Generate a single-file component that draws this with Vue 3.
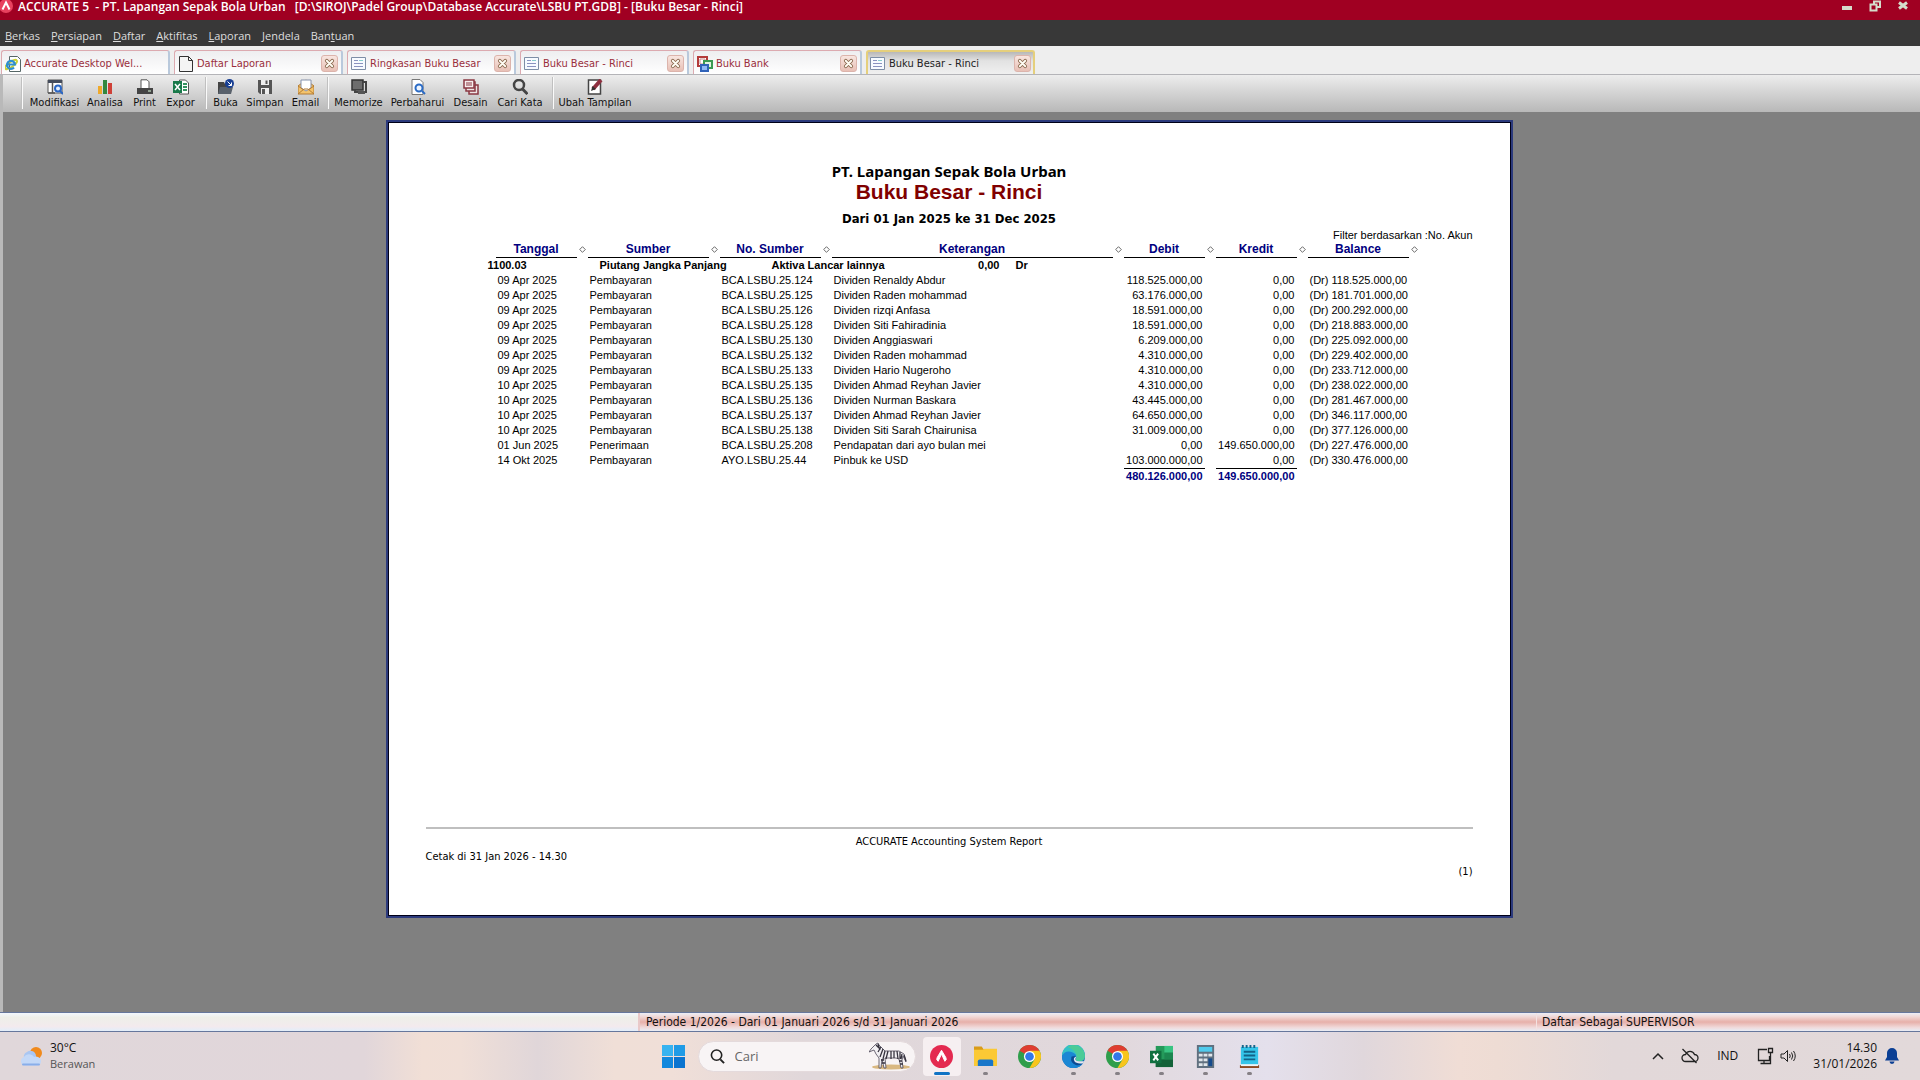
<script setup>
const menus = [
  ['', 'B', 'erkas'],
  ['', 'P', 'ersiapan'],
  ['', 'D', 'aftar'],
  ['', 'A', 'ktifitas'],
  ['', 'L', 'aporan'],
  ['', 'J', 'endela'],
  ['Ban', 't', 'uan'],
]

const tabs = [
  { label: 'Accurate Desktop Wel...', icon: 'web', closable: false },
  { label: 'Daftar Laporan', icon: 'page', closable: true },
  { label: 'Ringkasan Buku Besar', icon: 'report', closable: true },
  { label: 'Buku Besar - Rinci', icon: 'report', closable: true },
  { label: 'Buku Bank', icon: 'bank', closable: true },
  { label: 'Buku Besar - Rinci', icon: 'report', closable: true, active: true },
]

const toolGroups = [
  [
    { label: 'Modifikasi', icon: 'modify', width: 57 },
    { label: 'Analisa', icon: 'chart', width: 44 },
    { label: 'Print', icon: 'print', width: 35 },
    { label: 'Expor', icon: 'excel', width: 37 },
  ],
  [
    { label: 'Buka', icon: 'open', width: 33 },
    { label: 'Simpan', icon: 'save', width: 46 },
    { label: 'Email', icon: 'mail', width: 35 },
  ],
  [
    { label: 'Memorize', icon: 'memory', width: 55 },
    { label: 'Perbaharui', icon: 'refresh', width: 63 },
    { label: 'Desain', icon: 'design', width: 43 },
    { label: 'Cari Kata', icon: 'find', width: 56 },
  ],
  [{ label: 'Ubah Tampilan', icon: 'edit', width: 78 }],
]

const columns = ['Tanggal', 'Sumber', 'No. Sumber', 'Keterangan', 'Debit', 'Kredit', 'Balance']
const widths = [81, 121, 101, 281, 81, 81, 101]

const rows = [
  ['09 Apr 2025', 'Pembayaran', 'BCA.LSBU.25.124', 'Dividen Renaldy Abdur', '118.525.000,00', '0,00', '(Dr) 118.525.000,00'],
  ['09 Apr 2025', 'Pembayaran', 'BCA.LSBU.25.125', 'Dividen Raden mohammad', '63.176.000,00', '0,00', '(Dr) 181.701.000,00'],
  ['09 Apr 2025', 'Pembayaran', 'BCA.LSBU.25.126', 'Dividen rizqi Anfasa', '18.591.000,00', '0,00', '(Dr) 200.292.000,00'],
  ['09 Apr 2025', 'Pembayaran', 'BCA.LSBU.25.128', 'Dividen Siti Fahiradinia', '18.591.000,00', '0,00', '(Dr) 218.883.000,00'],
  ['09 Apr 2025', 'Pembayaran', 'BCA.LSBU.25.130', 'Dividen Anggiaswari', '6.209.000,00', '0,00', '(Dr) 225.092.000,00'],
  ['09 Apr 2025', 'Pembayaran', 'BCA.LSBU.25.132', 'Dividen Raden mohammad', '4.310.000,00', '0,00', '(Dr) 229.402.000,00'],
  ['09 Apr 2025', 'Pembayaran', 'BCA.LSBU.25.133', 'Dividen Hario Nugeroho', '4.310.000,00', '0,00', '(Dr) 233.712.000,00'],
  ['10 Apr 2025', 'Pembayaran', 'BCA.LSBU.25.135', 'Dividen Ahmad Reyhan Javier', '4.310.000,00', '0,00', '(Dr) 238.022.000,00'],
  ['10 Apr 2025', 'Pembayaran', 'BCA.LSBU.25.136', 'Dividen Nurman Baskara', '43.445.000,00', '0,00', '(Dr) 281.467.000,00'],
  ['10 Apr 2025', 'Pembayaran', 'BCA.LSBU.25.137', 'Dividen Ahmad Reyhan Javier', '64.650.000,00', '0,00', '(Dr) 346.117.000,00'],
  ['10 Apr 2025', 'Pembayaran', 'BCA.LSBU.25.138', 'Dividen Siti Sarah Chairunisa', '31.009.000,00', '0,00', '(Dr) 377.126.000,00'],
  ['01 Jun 2025', 'Penerimaan', 'BCA.LSBU.25.208', 'Pendapatan dari ayo bulan mei', '0,00', '149.650.000,00', '(Dr) 227.476.000,00'],
  ['14 Okt 2025', 'Pembayaran', 'AYO.LSBU.25.44', 'Pinbuk ke USD', '103.000.000,00', '0,00', '(Dr) 330.476.000,00'],
]

const apps = ['accurate', 'explorer', 'chrome', 'edge', 'chrome', 'excel', 'calc', 'notepad']
</script>

<template>
  <div class="desktop">
    <header class="titlebar">
      <svg class="app-mark" viewBox="0 0 14 14" aria-hidden="true">
        <circle cx="6" cy="6" r="7" fill="#e8415f" />
        <path d="M2.500 9.500 6 2.500 9.500 9.500" fill="none" stroke="#fff" stroke-width="2" />
      </svg>
      <h1>ACCURATE 5&nbsp; - PT. Lapangan Sepak Bola Urban&nbsp;&nbsp; [D:\SIROJ\Padel Group\Database Accurate\LSBU PT.GDB] - [Buku Besar - Rinci]</h1>
      <div class="window-buttons">
        <button aria-label="Minimize"><svg viewBox="0 0 12 12"><path d="M1 6h10v4H1z" fill="#d5dccb" /></svg></button>
        <button aria-label="Restore"><svg viewBox="0 0 12 12"><path d="M5 4V1.500h6V7H8M1.500 4.500h6v6h-6z" fill="none" stroke="#d5dccb" stroke-width="2" /></svg></button>
        <button aria-label="Close"><svg viewBox="0 0 12 12"><path d="M2 2.500 10 8.500M10 2.500 2 8.500" stroke="#d5dccb" stroke-width="3" /></svg></button>
      </div>
    </header>

    <nav class="menubar">
      <a v-for="m in menus" :key="m[2]" href="#">{{ m[0] }}<u>{{ m[1] }}</u>{{ m[2] }}</a>
    </nav>

    <div class="tabs">
      <div v-for="(t, i) in tabs" :key="i" class="tab" :class="{ active: t.active }">
        <svg class="tab-icon" viewBox="0 0 16 16" aria-hidden="true">
          <template v-if="t.icon === 'web'">
            <path d="M4.500.5h8l3 3v12h-11z" fill="#fff" stroke="#566" />
            <ellipse cx="6" cy="8.500" rx="7" ry="2.500" fill="none" stroke="#c9d23a" stroke-width="2" transform="rotate(-35 6 8.500)" />
            <path d="M2 8.500h8a4 4 0 1 0-1 3" fill="none" stroke="#2f8fd0" stroke-width="2.200" />
          </template>
          <path v-else-if="t.icon === 'page'" d="M1.500.5h9l4 4v11h-13zM10.500.5v4h4" fill="#f4f4f4" stroke="#333" />
          <template v-else-if="t.icon === 'report'">
            <path d="M.5 1.500h14v12H.5z" fill="#f7fbff" stroke="#7d8ea6" />
            <path d="M3 4.500h4M3 7.500h9M3 10.500h9" stroke="#8a93c0" />
            <path d="M8 4.500h4" stroke="#8cc" />
          </template>
          <template v-else>
            <path d="M1 1h9v9H1z" fill="#fff" stroke="#b33a3a" stroke-width="2" />
            <path d="M3 3h5v5H3z" fill="#fff" stroke="#c98a8a" />
            <path d="M7 5h8v7H7z" fill="#dff3df" stroke="#3a9a52" stroke-width="2" />
            <path d="M4 9h7v6H4z" fill="#8db8f5" stroke="#2f62b8" stroke-width="2" />
          </template>
        </svg>
        <a href="#">{{ t.label }}</a>
        <button v-if="t.closable" class="tab-close" aria-label="Tutup tab">
          <svg viewBox="0 0 12 12"><path d="M3 3 9 9M9 3 3 9" stroke="#8a6a50" stroke-width="4" stroke-linecap="round" /><path d="M3 3 9 9M9 3 3 9" stroke="#fffdf4" stroke-width="2" stroke-linecap="round" /></svg>
        </button>
      </div>
    </div>

    <div class="client">
      <div class="toolbar">
        <div v-for="(g, gi) in toolGroups" :key="gi" class="tool-group">
          <button v-for="b in g" :key="b.label" class="tool" :style="{ width: b.width + 'px' }">
            <svg viewBox="0 0 16 16" aria-hidden="true">
              <template v-if="b.icon === 'modify'">
                <path d="M1 1h14v13H1z" fill="#fff" stroke="#555" /><path d="M1 1h14v3H1z" fill="#444c5c" /><path d="M5.500 4v10M1 14h7" stroke="#555" stroke-width="1.500" />
                <circle cx="11" cy="9.500" r="3" fill="#e5f0ff" stroke="#2a66c4" stroke-width="2" /><path d="m13 12 3 3" stroke="#2a66c4" stroke-width="2" />
              </template>
              <template v-else-if="b.icon === 'chart'">
                <path d="M1 7h4v8H1z" fill="#efa92b" /><path d="M6 1h4v14H6z" fill="#33873f" /><path d="M11 4h4v11h-4z" fill="#cf4037" />
              </template>
              <template v-else-if="b.icon === 'print'">
                <path d="M4 9V.8h6l2 2V9" fill="#fff" stroke="#555" /><path d="M0 9h16v6H0z" fill="#444" /><path d="M11 12h3" stroke="#dfd" />
              </template>
              <template v-else-if="b.icon === 'excel'">
                <path d="M6.500 1h6l3 3v11h-9z" fill="#fff" stroke="#555" /><path d="M10 5h4M10 8h4M10 11h4" stroke="#349260" stroke-width="2" /><path d="M0 2h9v12H0z" fill="#18794a" /><path d="m2 5 5 6M7 5l-5 6" stroke="#fff" stroke-width="1.500" />
              </template>
              <template v-else-if="b.icon === 'open'">
                <path d="M0 3h6l1 2h6v10H0z" fill="#444" /><path d="M2 8h13l-2 7H0z" fill="#59616b" /><circle cx="11.500" cy="4.500" r="4.500" fill="#183f93" /><path d="m9.500 2.500 4 4M13.500 3.500v3h-3" fill="none" stroke="#fff" />
              </template>
              <template v-else-if="b.icon === 'save'">
                <path d="M1 1h14v14H3l-2-2z" fill="#555" /><path d="M4 1h8v5H4zM4 9h8v6H4z" fill="#eee" /><path d="M8.500 1.500h2V5h-2zM5 10h3v5H5z" fill="#555" />
              </template>
              <template v-else-if="b.icon === 'mail'">
                <path d="M0 7 8 1l8 6v8H0z" fill="#f3c36c" stroke="#b27b35" /><path d="M3 1h10v8l-5 3-5-3z" fill="#fff" stroke="#8693ad" /><path d="m0 15 6-5h4l6 5M0 7l6 4M16 7l-6 4" fill="none" stroke="#b27b35" />
              </template>
              <template v-else-if="b.icon === 'memory'">
                <path d="M1 1h11v10H1z" fill="#6d6d6d" stroke="#333" stroke-width="1.500" /><path d="M12 3h3v10H4v-2" fill="none" stroke="#444" stroke-width="2" /><path d="M7 12h7v3H7z" fill="#555" />
              </template>
              <template v-else-if="b.icon === 'refresh'">
                <path d="M2 .5h8l3 3v12H2z" fill="#fff" stroke="#777" /><circle cx="9" cy="9" r="3.500" fill="#edf5ff" stroke="#2b6bc5" stroke-width="2" /><path d="m12 12 3 3" stroke="#2b6bc5" stroke-width="2" />
              </template>
              <template v-else-if="b.icon === 'design'">
                <path d="M6 6h9v9H6z" fill="#efe5e5" stroke="#8a3943" stroke-width="1.500" /><path d="M3 3h9v9H3z" fill="#efe5e5" stroke="#8a3943" stroke-width="1.500" /><path d="M1 1h10v8H1z" fill="#f7eeee" stroke="#8a3943" stroke-width="1.500" /><path d="M3 4h6M3 6h6" stroke="#8a3943" />
              </template>
              <template v-else-if="b.icon === 'find'">
                <circle cx="7" cy="6" r="5" fill="none" stroke="#444" stroke-width="2.500" /><path d="m10.500 10 5 5" stroke="#444" stroke-width="3" />
              </template>
              <template v-else>
                <path d="M1.500 1h12v14h-12z" fill="#fff" stroke="#444" stroke-width="1.500" /><path d="M6 10 14 1" stroke="#8f3040" stroke-width="4" /><path d="m4 12 1.500-5 3.500 3z" fill="#333" />
              </template>
            </svg>
            <span>{{ b.label }}</span>
          </button>
        </div>
      </div>

      <main class="workspace">
        <article class="sheet">
          <h2 class="company">PT. Lapangan Sepak Bola Urban</h2>
          <h2 class="report-title">Buku Besar - Rinci</h2>
          <h3 class="period">Dari 01 Jan 2025 ke 31 Dec 2025</h3>
          <p class="filter">Filter berdasarkan :No. Akun</p>

          <table class="ledger">
            <colgroup>
              <template v-for="(w, i) in widths" :key="i">
                <col :style="{ width: w + 'px' }" />
                <col class="gutter" />
              </template>
            </colgroup>
            <thead>
              <tr>
                <template v-for="c in columns" :key="c">
                  <th class="head" scope="col">{{ c }}</th>
                  <td class="grip"><svg viewBox="0 0 8 8" aria-hidden="true"><path d="M4 .8 7.200 4 4 7.200.8 4z" fill="#fff" stroke="#444" stroke-width=".9" /></svg></td>
                </template>
              </tr>
            </thead>
            <tbody>
              <tr>
                <td colspan="14">
                  <div class="account">
                    <span>1100.03</span><span>Piutang Jangka Panjang</span><span>Aktiva Lancar lainnya</span><span class="opening">0,00</span><span>Dr</span>
                  </div>
                </td>
              </tr>
              <tr v-for="(r, ri) in rows" :key="ri">
                <template v-for="(c, ci) in r" :key="ci">
                  <td :class="{ num: ci > 3 }">{{ c }}</td>
                  <td></td>
                </template>
              </tr>
            </tbody>
            <tfoot>
              <tr>
                <td colspan="8"></td>
                <td class="total">480.126.000,00</td>
                <td></td>
                <td class="total">149.650.000,00</td>
                <td colspan="3"></td>
              </tr>
            </tfoot>
          </table>

          <footer class="sheet-footer">
            <p class="center">ACCURATE Accounting System Report</p>
            <p>Cetak di 31 Jan 2026 - 14.30</p>
            <p class="right">(1)</p>
          </footer>
        </article>
      </main>
    </div>

    <div class="statusbar">
      <div class="cell blank"></div>
      <div class="cell period-cell">Periode 1/2026 - Dari 01 Januari 2026 s/d 31 Januari 2026</div>
      <div class="cell user-cell">Daftar Sebagai SUPERVISOR</div>
    </div>

    <footer class="taskbar">
      <div class="weather">
        <svg viewBox="0 0 24 20" aria-hidden="true">
          <circle cx="17" cy="7" r="6" fill="#f08a1c" />
          <path d="M6 14a5 5 0 0 1 2-8 5.500 5.500 0 0 1 9 4v4z" fill="#a9c6f2" />
          <path d="M5 19.500a4.500 4.500 0 0 1 0-8.500 6 6 0 0 1 10 0 5 5 0 0 1 4 0 4.500 4.500 0 0 1 0 8.500z" fill="#c3d8f7" />
          <path d="M4 18.500h16" stroke="#89aee9" stroke-width="2" stroke-linecap="round" />
        </svg>
        <div><div>30°C</div><div class="sky">Berawan</div></div>
      </div>

      <div class="dock">
        <button class="start" aria-label="Start">
          <svg viewBox="0 0 24 24"><path d="M0 0h11.500v11.500H0z" fill="#37b3f0" /><path d="M12.500 0H24v11.500H12.500z" fill="#1f9be6" /><path d="M0 12.500h11.500V24H0z" fill="#1288dd" /><path d="M12.500 12.500H24V24H12.500z" fill="#0a74d0" /></svg>
        </button>
        <label class="search">
          <svg class="lens" viewBox="0 0 16 16" aria-hidden="true"><circle cx="7" cy="6.500" r="5.500" fill="none" stroke="#222" stroke-width="1.700" /><path d="m11 11 4 4" stroke="#222" stroke-width="2" /></svg>
          <input type="text" placeholder="Cari" aria-label="Cari" />
          <svg class="zebra" viewBox="0 0 42 28" aria-hidden="true">
            <ellipse cx="22" cy="25" rx="19" ry="2.500" fill="#d9b881" />
            <path d="M2 7 7 2l2-1 1 2 6 6 14 0 5 3 2 8-3-6-1 4 1 8h-2l-2-9-3-1-11 0 1 10h-2l-2-9-1 9h-2l0-10-3-4-2-4-5 2z" fill="#f2f0f3" stroke="#4b4657" stroke-width=".8" />
            <path d="m7 3 3 3M9 2l2 6M12 5l-3 5M14 7l-3 8M16 9l-2 8M19 9l-2 8M22 9v8M25 9v7M28 9l1 8M31 10l0 7M33 12l-1 5M12 18h3M13 21h3M30 19h3M31 22h3M35 13l2 6" fill="none" stroke="#37333f" stroke-width="1.300" />
          </svg>
        </label>
        <button v-for="(a, i) in apps" :key="i" class="app" :class="{ current: a === 'accurate' }" :aria-label="a">
          <svg viewBox="0 0 24 24">
            <template v-if="a === 'accurate'">
              <circle cx="12" cy="12" r="12" fill="#e42a50" /><path d="M12 5.500 7.500 13a3 3 0 0 0 1 4L12 9.500l3.500 7.500a3 3 0 0 0 1-4z" fill="#fff" stroke="#fff" stroke-width="1" />
            </template>
            <template v-else-if="a === 'explorer'">
              <path d="M0 1.500h8l2 3h14v6H0z" fill="#d99b18" /><path d="M0 5h9l2-1h13v18H0z" fill="#fbc935" /><path d="M4 22v-5q0-2 2-2h12q2 0 2 2v5z" fill="#1876c9" />
            </template>
            <template v-else-if="a === 'chrome'">
              <circle cx="12" cy="12" r="12" fill="#2f9e4b" /><path d="M12 12 1.600 6A12 12 0 0 1 22.400 6z" fill="#df3d31" /><path d="M12 6h10.400A12 12 0 0 1 12 24l5.200-9z" fill="#f8c51d" /><circle cx="12" cy="12" r="5.800" fill="#fff" /><circle cx="12" cy="12" r="4.500" fill="#3278e8" />
            </template>
            <template v-else-if="a === 'edge'">
              <circle cx="12" cy="12" r="12" fill="#1267b4" /><path d="M0 11A12 12 0 0 1 24 11q0 6-6 6-5 0-3-4 0-4-5-4-6 0-10 2z" fill="#35c1c6" /><path d="M12 0a12 12 0 0 1 12 11q0 6-6 6-5 0-3-4 1-7-9-11 3-2 6-2z" fill="#55cf83" opacity=".7" /><path d="M0 12Q2 6 9 7q5 1 6 5-3-2-5 1-1 6 6 8 3 0 6-2-3 5-10 5A12 12 0 0 1 0 12z" fill="#1b87d4" /><path d="M10 12q-2 7 5 9 4 1 7-2-4 1-8-2-2-2 0-5z" fill="#0d4b93" /><path d="M15 12q-3 5 3 5h5l-1 2q-7 1-9-2-2-4 2-5z" fill="#e6e6ee" />
            </template>
            <template v-else-if="a === 'excel'">
              <path d="M6 1h18v22H6z" fill="#249a5a" /><path d="M15 1h9v7h-9z" fill="#38c481" /><path d="M6 15h18v8H6z" fill="#136238" /><path d="M15 8h9v7h-9z" fill="#1c8750" /><path d="M0 6h12v13H0z" fill="#107040" /><path d="m3.500 9 5 7M8.500 9l-5 7" stroke="#fff" stroke-width="2" />
            </template>
            <template v-else-if="a === 'calc'">
              <path d="M3 0h18v24H3z" fill="#60707f" /><path d="M5 2h14v5H5z" fill="#50cbed" /><path d="M5 9h4v3H5zM10 9h4v3h-4zM15 9h4v3h-4zM5 14h4v3H5zM10 14h4v3h-4zM5 19h4v3H5zM10 19h4v3h-4z" fill="#e0e6eb" /><path d="M15 14h4v8h-4z" fill="#164b8c" />
            </template>
            <template v-else>
              <path d="M3 2h18v19H3z" fill="#35c4e9" /><path d="M2 21h20v3H2z" fill="#8c4a22" /><path d="M3 20h18v2H3z" fill="#edf4f6" /><path d="M6 7h12M6 11h12M6 15h12" stroke="#136388" stroke-width="2" /><path d="M5 0v3M9 0v3M13 0v3M17 0v3" stroke="#17658a" stroke-width="2" />
            </template>
          </svg>
          <i v-if="i !== 2"></i>
        </button>
      </div>

      <div class="tray">
        <svg class="t-chev" viewBox="0 0 12 12" aria-hidden="true"><path d="m1 9 5-5 5 5" fill="none" stroke="#222" stroke-width="1.500" /></svg>
        <svg class="t-cloud" viewBox="0 0 18 16" aria-hidden="true"><path d="M4.500 13.500a3.500 3.500 0 0 1 0-7 4.800 4.800 0 0 1 9 0 3.500 3.500 0 0 1 0 7zM1.500 1l14 14" fill="none" stroke="#222" stroke-width="1.300" /></svg>
        <span class="lang">IND</span>
        <svg class="t-net" viewBox="0 0 18 18" aria-hidden="true"><path d="M11 2.500H2.500v11h11V9M8 13.500v3M4.500 16.500h7M12.500 1.500h4v4h-4zM14.500 5.500v11h-3" fill="none" stroke="#222" stroke-width="1.300" /></svg>
        <svg class="t-vol" viewBox="0 0 16 14" aria-hidden="true"><path d="M1 5h3l3.500-3.500v11L4 9H1zM9.500 5q1.500 2 0 4M11.500 3.500q2.500 3.500 0 7M13.500 2q3.500 5 0 10" fill="none" stroke="#222" /></svg>
        <time class="clock"><span>14.30</span><span>31/01/2026</span></time>
        <svg class="t-bell" viewBox="0 0 14 16" aria-hidden="true"><path d="M7 0a5 5 0 0 1 5 5v4l2 3.500H0L2 9V5a5 5 0 0 1 5-5zM4.500 13.500h5a2.500 2.500 0 0 1-5 0z" fill="#0b3f94" /></svg>
      </div>
    </footer>
  </div>
</template>

<style>
body {
  margin: 0;
}
</style>

<style scoped>
.desktop {
  display: flex;
  flex-direction: column;
  min-height: 100vh;
  font: 11px/14px "DejaVu Sans Condensed", "DejaVu Sans", sans-serif;
  color: #111;
  background: #808080;
}
* {
  box-sizing: border-box;
}
button {
  padding: 0;
  border: 0;
  background: none;
  font: inherit;
  color: inherit;
}
a {
  color: inherit;
  text-decoration: none;
}
svg {
  display: block;
  flex: none;
}
h1, h2, h3, p {
  margin: 0;
}
.titlebar {
  display: flex;
  height: 20px;
  background: #a00022;
  color: #fff;
}
.app-mark {
  width: 14px;
  height: 14px;
}
.titlebar h1 {
  flex: 1;
  padding-left: 4px;
  font: 600 12px/14px "Open Sans", "Noto Sans", sans-serif;
  white-space: nowrap;
}
.window-buttons {
  display: flex;
  gap: 16px;
  padding-right: 11px;
}
.window-buttons svg {
  width: 12px;
  height: 12px;
}
.window-buttons button {
  height: 12px;
}
.menubar {
  display: flex;
  align-items: center;
  gap: 11px;
  height: 26px;
  padding: 6px 5px 0;
  background: #383838;
  font-family: "Open Sans", "Noto Sans", sans-serif;
  color: #dedede;
}
.tabs {
  display: flex;
  gap: 4px;
  height: 29px;
  padding: 4px 0 0 1px;
  background: #eeeeee;
  border-bottom: 1px solid #b4b4b8;
}
.tab {
  display: flex;
  align-items: center;
  gap: 3px;
  width: 169px;
  padding: 2px 3px 0;
  border: 1px solid #dcaab0;
  border-bottom: 0;
  border-right: 2px solid #b9c9dc;
  border-radius: 3px 3px 0 0;
  background: linear-gradient(#eeeef0, #ffffff);
  color: #9a2f3c;
}
.tab.active {
  padding: 1px 2px 0;
  border: 2px solid #e5cf7c;
  border-bottom: 0;
  background: linear-gradient(#b8b8b8, #e2e2e2 40%, #f0f0f0);
  color: #222;
}
.tab-icon {
  width: 16px;
  height: 16px;
}
.tab a {
  flex: 1;
  white-space: nowrap;
}
.tab-close {
  display: flex;
  align-items: center;
  justify-content: center;
  width: 17px;
  height: 17px;
  border: 1px solid #dcb4ac;
  border-radius: 3px;
  background: linear-gradient(#f8e6e0, #e8c0b6);
}
.tab-close svg {
  width: 11px;
  height: 11px;
}
.client {
  flex: 1;
  display: flex;
  flex-direction: column;
  border-left: 3px solid #b9b9b9;
}
.toolbar {
  display: flex;
  height: 37px;
  padding-left: 19px;
  background: linear-gradient(#ededed, #b8b8b8);
}
.tool-group {
  display: flex;
  margin: 2px 0 3px;
  padding: 0 7px 0 3px;
  border-left: 1px solid #fafafa;
  box-shadow: -1px 0 #c0c0c0;
}
.tool-group:nth-child(n + 2) {
  padding: 0 5px 0 2px;
}
.tool {
  display: flex;
  flex-direction: column;
  align-items: center;
  gap: 1px;
  padding-top: 2px;
  white-space: nowrap;
  line-height: 14px;
}
.tool svg {
  width: 16px;
  height: 16px;
}
.workspace {
  flex: 1;
  display: flex;
  justify-content: center;
  align-items: flex-start;
  padding: 8px 25px 32px 0;
}
.sheet {
  display: flex;
  flex-direction: column;
  width: 1127px;
  min-height: 798px;
  padding: 39px 38px 37px;
  border: 2px solid #2c3a7c;
  box-shadow: inset 0 0 0 1px #000018;
  background: #fff;
  font: 11px/15px "Liberation Sans", Arial, sans-serif;
  color: #000;
}
.company,
.report-title,
.period {
  text-align: center;
}
.company {
  font: bold 15px/20px "Noto Sans", sans-serif;
}
.report-title {
  font: bold 21px/22px "Liberation Sans", Arial, sans-serif;
  color: #800000;
}
.period {
  margin-top: 8px;
  font: bold 13px/16px "DejaVu Sans Condensed", "DejaVu Sans", sans-serif;
}
.filter {
  line-height: 15px;
  padding-top: 1px;
  text-align: right;
}
.ledger {
  width: 924px;
  margin-left: 70px;
  table-layout: fixed;
  border-collapse: separate;
  border-spacing: 0;
}
.ledger td,
.ledger th {
  height: 15px;
  padding: 0 2px;
  white-space: nowrap;
}
.ledger .gutter {
  width: 11px;
}
.ledger .head {
  padding-bottom: 2px;
  border-bottom: 1px solid #000;
  font-size: 12px;
  line-height: 12px;
  color: #000080;
}
.ledger .grip {
  padding: 0 2px 2px;
}
.grip svg {
  width: 7px;
  height: 7px;
}
.ledger .num {
  text-align: right;
}
.ledger .total {
  border-top: 1px solid #000;
  text-align: right;
  font-weight: bold;
  line-height: 13px;
  color: #000080;
}
.account {
  display: grid;
  grid-template-columns: 112px 172px 172px 56px 60px;
  margin-left: -10px;
  font-weight: bold;
}
.account .opening {
  text-align: right;
}
.account span:last-child {
  padding-left: 16px;
}
.sheet-footer {
  margin-top: auto;
  padding-top: 5px;
  border-top: 2px solid #bfbfbf;
  font-family: "DejaVu Sans Condensed", "DejaVu Sans", sans-serif;
}
.center {
  text-align: center;
}
.right {
  text-align: right;
}
.statusbar {
  display: flex;
  height: 20px;
  border: solid #66779c;
  border-width: 1px 0;
}
.cell {
  padding: 0 6px;
  font-size: 12px;
  line-height: 18px;
  background: linear-gradient(#eceef6, #f0d9d8 20%, #e7b0aa 50%, #f0d9da 80%, #e8edf6);
}
.blank {
  flex: 0 0 640px;
  border-right: 2px solid #e9c9c9;
  background: linear-gradient(#f2f7fd, #eeefe9 25%, #f3eaee 75%, #e2eefa);
}
.period-cell {
  flex: 1;
}
.user-cell {
  flex: 0 0 384px;
  padding-left: 5px;
  border-left: 1px solid #f3e2e2;
}
.taskbar {
  display: grid;
  grid-template-columns: 1fr auto 1fr;
  height: 48px;
  background: linear-gradient(90deg, #e0d7da 0, #e1d6da 19%, #f1dfd6 22%, #f0dfd7 24%, #e0d6d9 28%, #f0dfd7 32%, #f0dfd8 35%, #e0d7da 42%, #e1d8dc 58%, #e4e0ec 66%, #e0d7dc 71%, #f0ddd5 76%, #eedcd4 78%, #e2d8d9 84%, #e2d9da 100%);
  font: 12px/16px "Open Sans", "Noto Sans", sans-serif;
}
.weather {
  display: flex;
  align-items: center;
  gap: 7px;
  padding-left: 19px;
}
.weather svg {
  width: 24px;
  height: 20px;
}
.sky {
  font-size: 11px;
  color: #555;
}
.dock {
  display: flex;
  align-items: center;
  padding-left: 16px;
}
.start {
  margin-right: 13px;
}
.start svg,
.app svg {
  width: 23px;
  height: 23px;
}
.search {
  display: flex;
  align-items: center;
  width: 218px;
  height: 31px;
  margin-right: 7px;
  padding: 0 4px 0 11px;
  border: 1px solid #e4dadc;
  border-radius: 16px;
  background: #f8f4f5;
}
.lens {
  width: 15px;
  height: 15px;
}
.search input {
  flex: 1;
  min-width: 0;
  padding: 0 0 0 10px;
  border: 0;
  outline: 0;
  background: none;
  font: 13px/18px "Open Sans", "Noto Sans", sans-serif;
}
.search input::placeholder {
  color: #666;
  opacity: 1;
}
.zebra {
  width: 42px;
  height: 28px;
}
.app {
  display: flex;
  flex-direction: column;
  align-items: center;
  justify-content: flex-end;
  gap: 4px;
  width: 38px;
  height: 39px;
  margin-right: 6px;
  padding-bottom: 1px;
  border-radius: 4px;
}
.app i {
  width: 5px;
  height: 3px;
  border-radius: 2px;
  background: #858085;
}
.app:nth-of-type(4) svg {
  margin-bottom: 7px;
}
.app.current {
  background: #f6eff1;
}
.app.current i {
  width: 16px;
  background: #1173c4;
}
.tray {
  display: flex;
  align-items: center;
  justify-content: flex-end;
  padding-right: 21px;
}
.t-chev {
  width: 12px;
  height: 12px;
  margin-right: 17px;
}
.t-cloud {
  width: 18px;
  height: 16px;
}
.lang {
  margin: 0 18px;
}
.t-net {
  width: 18px;
  height: 18px;
  margin-right: 6px;
}
.t-vol {
  width: 16px;
  height: 14px;
}
.clock {
  display: flex;
  flex-direction: column;
  align-items: flex-end;
  margin: 0 8px 0 17px;
}
.t-bell {
  width: 14px;
  height: 16px;
}
</style>
